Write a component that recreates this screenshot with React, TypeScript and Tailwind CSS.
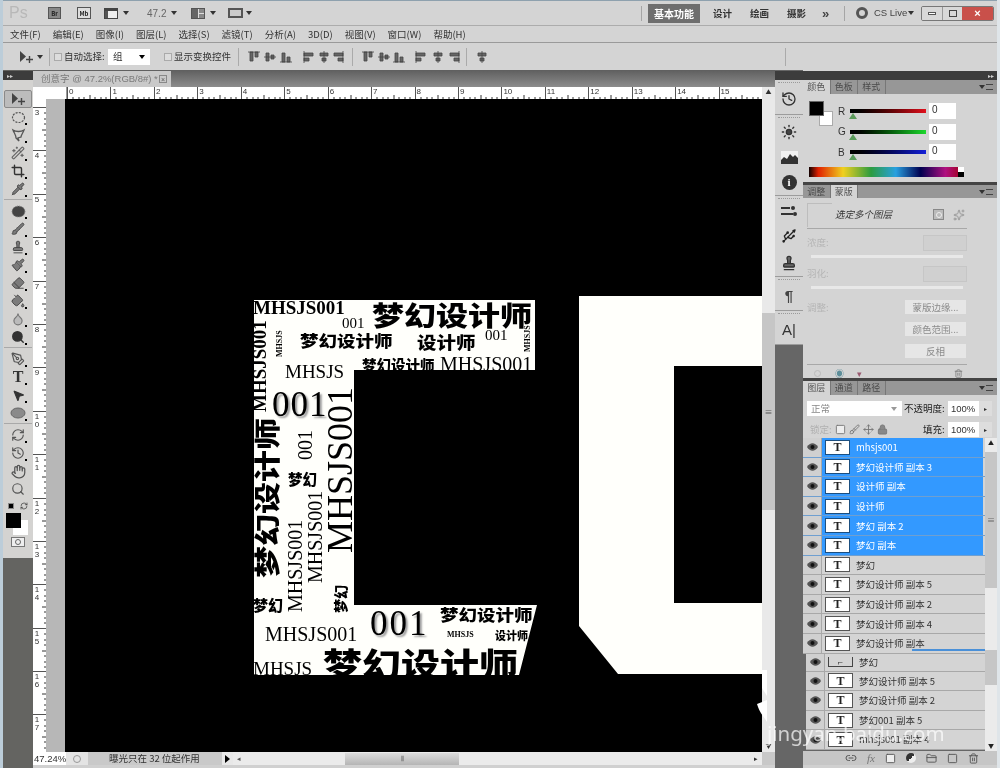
import type { ReactNode } from "react";
import {
  Crop, Wand2, Pipette, Brush, Stamp, Eraser, PaintBucket, Droplet, PenTool, MousePointer2, Hand, Search,
  Link2, Trash2, Lock, Move, Sun, Usb, FolderClosed, Square, RefreshCw, Sparkles, Paintbrush, History,
} from "lucide-react";

const cjk = "font-['Noto_Sans_CJK_SC',sans-serif]";

function Caret({ className = "" }: { className?: string }) {
  return <span className={`h-0 w-0 border-x-[3px] border-t-[4px] border-x-transparent border-t-[#333] ${className}`} />;
}

function MoveIcon() {
  return (
    <svg width="16" height="16" viewBox="0 0 16 16" className="text-[#444]">
      <path d="M2 2v11l6-5.5z" fill="currentColor" />
      <path d="M11.5 7v7M8 10.5h7" stroke="currentColor" strokeWidth="1.4" />
    </svg>
  );
}

function Grip() {
  return <div className="mx-[3px] mt-[2px] h-[2px] border-t border-dotted border-[#9a9a9a]" />;
}

// toolbox: one slot for each tool, flyout mark in the corner
function Tool({ children, on, plain }: { children: ReactNode; on?: boolean; plain?: boolean }) {
  return (
    <div className={`relative flex h-[18px] w-full items-center justify-center ${on ? "rounded-[2px] border border-[#8a8a8a] bg-[#bcbcbc]" : ""}`}>
      {children}
      {!plain && <span className="absolute bottom-[1px] right-[5px] h-[2px] w-[2px] bg-black" />}
    </div>
  );
}

const ic = { size: 14, className: "text-[#3f3f3f]", fill: "#7b7b7b", strokeWidth: 1.5 };

function Toolbox() {
  const sep = <div className="my-[1px] h-[2px] w-full shrink-0 border-t border-[#a9a9a9]" />;
  return (
    <div className="flex h-full w-[30px] shrink-0 flex-col bg-[#646461]">
      <div className="mt-[1px] h-[9px] shrink-0 bg-[#3c3c3c] pl-[4px] text-[6px] leading-[9px] text-[#ccc]">▸▸</div>
      <div className="flex h-[478px] shrink-0 flex-col items-center bg-[#d4d3d1] px-[1px] pt-[10px]">
        <Tool on plain><MoveIcon /></Tool>
        <Tool><svg width="15" height="13" viewBox="0 0 15 13"><ellipse cx="7.5" cy="6.5" rx="6" ry="5" fill="none" stroke="#555" strokeWidth="1.2" strokeDasharray="2 1.2" /></svg></Tool>
        <Tool><svg width="15" height="14" viewBox="0 0 15 14"><path d="M2 2c3 2 8 2 11 0-1 3-3 5-3 7l-3 1 1 3-3-3C5 7 3 5 2 2z" fill="none" stroke="#555" strokeWidth="1.3" /></svg></Tool>
        <Tool><Wand2 size={14} className="text-[#666]" /></Tool>
        <Tool><Crop size={14} className="text-[#333]" strokeWidth={2.4} /></Tool>
        <Tool><Pipette {...ic} /></Tool>
        {sep}
        <Tool><svg width="15" height="13" viewBox="0 0 15 13"><ellipse cx="7.5" cy="6.5" rx="6.5" ry="5.5" fill="#444" stroke="#888" strokeDasharray="1 1" /></svg></Tool>
        <Tool><Brush {...ic} /></Tool>
        <Tool><Stamp {...ic} /></Tool>
        <Tool><Paintbrush {...ic} /></Tool>
        <Tool><Eraser {...ic} /></Tool>
        <Tool><PaintBucket {...ic} /></Tool>
        <Tool><Droplet size={14} className="text-[#777]" fill="#bbb" /></Tool>
        <Tool><Search size={14} className="text-[#333]" fill="#333" strokeWidth={2.4} /></Tool>
        {sep}
        <Tool><PenTool size={14} className="text-[#555]" /></Tool>
        <Tool><span className="font-['Liberation_Serif',serif] text-[16px] font-bold leading-none text-[#333]">T</span></Tool>
        <Tool><MousePointer2 size={13} className="text-[#333]" fill="#333" /></Tool>
        <Tool><svg width="16" height="12" viewBox="0 0 16 12"><ellipse cx="8" cy="6" rx="7" ry="5" fill="#8a8a8a" stroke="#666" /></svg></Tool>
        {sep}
        <Tool><RefreshCw size={14} className="text-[#555]" /></Tool>
        <Tool><History size={14} className="text-[#555]" /></Tool>
        <Tool plain><Hand size={15} className="text-[#555]" /></Tool>
        <Tool plain><Search size={14} className="text-[#555]" /></Tool>
        <div className="mt-[2px] flex h-[12px] w-full shrink-0 items-center justify-between px-[4px]">
          <span className="h-[6px] w-[6px] border border-[#888] bg-black" />
          <RefreshCw size={8} className="text-[#333]" />
        </div>
        <div className="relative mt-[1px] h-[22px] w-[24px] shrink-0">
          <div className="absolute left-[7px] top-[7px] h-[15px] w-[15px] bg-white" />
          <div className="absolute left-0 top-0 h-[15px] w-[15px] bg-black" />
        </div>
        <div className="mt-[2px] flex h-[10px] w-[14px] shrink-0 items-center justify-center border border-[#777] bg-[#eee]">
          <span className="h-[6px] w-[6px] rounded-full border border-[#666]" />
        </div>
      </div>
    </div>
  );
}

function RulerCell({ n }: { n: number }) {
  return (
    <div className="relative flex h-full w-[43.45px] shrink-0 flex-col justify-between border-l border-[#555]">
      <span className="pl-[1px] pt-[1px] font-['Liberation_Sans',sans-serif] text-[8px] leading-[8px] text-[#333]">{n}</span>
      <svg width="43" height="4" viewBox="0 0 43 4" className="absolute bottom-0 left-0">
        {[5, 11, 16, 22, 27, 33, 38].map((x) => (
          <line key={x} x1={x} x2={x} y1={x === 22 ? 0 : 2} y2="4" stroke="#333" />
        ))}
      </svg>
    </div>
  );
}

function VRulerCell({ n }: { n: number }) {
  return (
    <div className="relative h-[43.4px] w-full shrink-0 border-t border-[#555]">
      <div className="flex w-[8px] flex-col items-center pt-[1px] font-['Liberation_Sans',sans-serif] text-[8px] leading-[8px] text-[#333]">
        {String(n).split("").map((d, i) => <span key={i}>{d}</span>)}
      </div>
      <svg width="4" height="43" viewBox="0 0 4 43" className="absolute right-0 top-0">
        {[5, 11, 16, 22, 27, 33, 38].map((y) => (
          <line key={y} y1={y} y2={y} x1={y === 22 ? 0 : 2} x2="4" stroke="#333" />
        ))}
      </svg>
    </div>
  );
}

function Art({ className, children }: { className: string; children: ReactNode }) {
  return <span className={`absolute whitespace-nowrap leading-none text-black ${className}`}>{children}</span>;
}

const serif = "font-['Liberation_Serif',serif]";
const heavy = "font-['Noto_Sans_CJK_SC',sans-serif] font-black";

// the lettered block on the canvas, coordinates are its own
function Artwork() {
  return (
    <div className="absolute left-[189px] top-[201px] h-[375px] w-[283px] overflow-hidden bg-[#fffffb] [clip-path:polygon(0_0,281px_0,281px_70px,100px_70px,100px_305px,283px_305px,265px_375px,0_375px)]">
      <Art className={`${serif} -left-[1px] -top-[2px] text-[19px] font-bold`}>MHSJS001</Art>
      <Art className={`${heavy} left-[118px] top-[0px] origin-top-left scale-y-[0.85] text-[32px]`}>梦幻设计师</Art>
      <Art className={`${serif} left-[88px] top-[16px] text-[15px]`}>001</Art>
      <Art className={`${heavy} left-[46px] top-[33px] origin-top-left scale-y-[0.85] text-[18.5px]`}>梦幻设计师</Art>
      <Art className={`${heavy} left-[163px] top-[34px] origin-top-left scale-y-[0.85] text-[19.5px]`}>设计师</Art>
      <Art className={`${serif} left-[231px] top-[28px] text-[15px]`}>001</Art>
      <Art className={`${heavy} left-[108px] top-[58px] text-[14.5px]`}>梦幻设计师</Art>
      <Art className={`${serif} left-[186px] top-[54px] text-[20px]`}>MHSJS001</Art>
      <Art className={`${serif} left-[31px] top-[62px] text-[19px]`}>MHSJS</Art>
      <Art className={`${serif} left-[18px] top-[87px] text-[35px] tracking-[1px] [text-shadow:2px_2px_2px_#999]`}>001</Art>
      <Art className={`${serif} -left-[4px] top-[112px] origin-top-left -rotate-90 text-[19px] font-bold`}>MHSJS001</Art>
      <Art className={`${serif} left-[22px] top-[57px] origin-top-left -rotate-90 text-[8px] font-bold`}>MHSJS</Art>
      <Art className={`${serif} left-[270px] top-[52px] origin-top-left -rotate-90 text-[8px] font-bold`}>MHSJS</Art>
      <Art className={`${serif} left-[68px] top-[253px] origin-top-left -rotate-90 text-[36px]`}>MHSJS001</Art>
      <Art className={`${heavy} -left-[1px] top-[278px] origin-top-left -rotate-90 scale-y-[0.8] text-[32px]`}>梦幻设计师</Art>
      <Art className={`${serif} left-[41px] top-[160px] origin-top-left -rotate-90 text-[20px]`}>001</Art>
      <Art className={`${heavy} left-[34px] top-[172px] text-[14.5px]`}>梦幻</Art>
      <Art className={`${serif} left-[51px] top-[283px] origin-top-left -rotate-90 text-[20px]`}>MHSJS001</Art>
      <Art className={`${serif} left-[31px] top-[312px] origin-top-left -rotate-90 text-[20px]`}>MHSJS001</Art>
      <Art className={`${heavy} -left-[1px] top-[297px] text-[15px]`}>梦幻</Art>
      <Art className={`${heavy} left-[79px] top-[313px] origin-top-left -rotate-90 text-[14px]`}>梦幻</Art>
      <Art className={`${serif} left-[116px] top-[306px] text-[35px] tracking-[2px] [text-shadow:2px_2px_2px_#999]`}>001</Art>
      <Art className={`${heavy} left-[186px] top-[307px] origin-top-left scale-y-[0.85] text-[18.5px]`}>梦幻设计师</Art>
      <Art className={`${serif} left-[11px] top-[324px] text-[20px]`}>MHSJS001</Art>
      <Art className={`${serif} left-[193px] top-[331px] text-[8px] font-bold`}>MHSJS</Art>
      <Art className={`${heavy} left-[241px] top-[330px] text-[11px]`}>设计师</Art>
      <Art className={`${heavy} left-[69px] top-[346px] origin-top-left scale-y-[0.85] text-[39px]`}>梦幻设计师</Art>
      <Art className={`${serif} -left-[1px] top-[359px] text-[19px]`}>MHSJS</Art>
    </div>
  );
}

function DocWindow() {
  return (
    <div className="flex h-full w-[742px] shrink-0 flex-col">
      <div className="h-[17px] shrink-0 bg-gradient-to-b from-[#5f5f5f] to-[#8c8c8c] pt-[1px]">
        <div className="flex h-[16px] w-[138px] items-center bg-[#c9c9c9] pl-[8px] font-['Liberation_Sans','Noto_Sans_CJK_SC',sans-serif] text-[9.5px] text-[#7a7a7a]">
          <span className="w-[118px] whitespace-nowrap">创意字 @ 47.2%(RGB/8#) *</span>
          <span className="flex h-[8px] w-[8px] items-center justify-center border border-[#888] text-[7px] leading-none text-[#555]">×</span>
        </div>
      </div>
      <div className="flex h-[12px] shrink-0 bg-white">
        <div className="h-full w-[34px] shrink-0 border-r border-[#999]" />
        <div className="flex min-w-0 flex-1 overflow-hidden">
          {Array.from({ length: 17 }, (_, i) => <RulerCell key={i} n={i} />)}
        </div>
        <div className="w-[13px] shrink-0 bg-[#e8e8e8] pt-[1px] text-center text-[6px] leading-[8px] text-[#333]">▲</div>
      </div>
      <div className="flex min-h-0 flex-1">
        <div className="w-[13px] shrink-0 overflow-hidden bg-white pt-[8px]">
          {Array.from({ length: 15 }, (_, i) => <VRulerCell key={i} n={i + 3} />)}
        </div>
        <div className="w-[19px] shrink-0 bg-[#b7b7b7]" />
        <div className="relative min-w-0 flex-1 overflow-hidden bg-black">
          <Artwork />
          <div className="absolute left-[514px] top-[197px] h-[378px] w-[183px] bg-[#fffffb] [clip-path:polygon(0_0,183px_0,183px_70px,95px_70px,95px_307px,183px_307px,183px_378px,39px_378px,0_330px)]" />
        </div>
        <div className="flex w-[13px] shrink-0 flex-col bg-[#e9e9e9]">
          <div className="mt-[214px] flex h-[197px] shrink-0 items-center justify-center bg-[#c6c6c6] text-[8px] text-[#555]">≡</div>
          <div className="mt-auto pb-[2px] text-center text-[6px] leading-[8px] text-[#333]">▼</div>
        </div>
      </div>
      <div className="flex h-[13px] shrink-0 items-stretch text-[9.5px] leading-[13px] text-[#333]">
        <div className="w-[33px] shrink-0 bg-white pl-[1px] font-['Liberation_Sans',sans-serif] text-[9.5px]">47.24%</div>
        <div className="flex w-[22px] shrink-0 items-center justify-center bg-[#e4e4e4]">
          <span className="h-[8px] w-[8px] rounded-full border border-[#999]" />
        </div>
        <div className="w-[134px] shrink-0 whitespace-nowrap bg-[#c9c9c9] pl-[21px]">曝光只在 32 位起作用</div>
        <div className="flex w-[11px] shrink-0 items-center justify-center bg-[#e8e8e8]">
          <span className="h-0 w-0 border-y-[4px] border-l-[5px] border-y-transparent border-l-black" />
        </div>
        <div className="flex min-w-0 flex-1 items-center bg-[#ebebeb] pl-[4px]">
          <span className="text-[7px] text-[#555]">◂</span>
          <div className="ml-[104px] flex h-[12px] w-[114px] items-center justify-center bg-gradient-to-b from-[#dcdcdc] to-[#b5b5b5] text-[7px] text-[#555]">⦀</div>
          <span className="ml-auto mr-[4px] text-[7px] text-[#333]">▸</span>
        </div>
        <div className="w-[13px] shrink-0 bg-[#c8c8c8]" />
      </div>
      <div className="h-[3px] shrink-0 bg-[#d0d0d0]" />
    </div>
  );
}

function DockGroup({ children, h }: { children: ReactNode; h: string }) {
  return (
    <div className={`flex w-full shrink-0 flex-col border-b border-[#9c9c9c] bg-[#d4d4d4] ${h}`}>
      <Grip />
      <div className="flex flex-1 flex-col items-center justify-around">{children}</div>
    </div>
  );
}

function Dock() {
  return (
    <div className="flex h-full w-[28px] shrink-0 flex-col bg-[#666]">
      <div className="mt-[1px] h-[9px] shrink-0 bg-[#3c3c3c]" />
      <DockGroup h="h-[35px]">
        <History size={16} className="text-[#333]" />
      </DockGroup>
      <DockGroup h="h-[81px]">
        <Sun size={16} className="text-[#333]" fill="#444" />
        <svg width="17" height="13" viewBox="0 0 17 13"><rect width="17" height="13" fill="#f2f2f2" /><path d="M0 13V9l3-3 3 2 3-5 3 3 2-2 3 3v6z" fill="#333" /></svg>
        <span className="flex h-[15px] w-[15px] items-center justify-center rounded-full bg-[#333] font-['Liberation_Serif',serif] text-[11px] font-bold text-white">i</span>
      </DockGroup>
      <DockGroup h="h-[81px]">
        <svg width="18" height="12" viewBox="0 0 18 12"><path d="M1 3h9M1 9h12" stroke="#333" strokeWidth="2" /><circle cx="13" cy="3" r="2" fill="#333" /><circle cx="15" cy="9" r="2" fill="#333" /></svg>
        <Usb size={16} className="text-[#222]" strokeWidth={2} />
        <Stamp size={16} className="text-[#333]" fill="#666" />
      </DockGroup>
      <DockGroup h="h-[34px]">
        <span className="font-['Liberation_Sans',sans-serif] text-[15px] font-bold leading-none text-[#444]">¶</span>
      </DockGroup>
      <DockGroup h="h-[34px]">
        <span className="font-['Liberation_Sans',sans-serif] text-[15px] leading-none text-[#333]">A|</span>
      </DockGroup>
    </div>
  );
}

function PanelTabs({ tabs, active, h = "h-[14px]" }: { tabs: string[]; active: number; h?: string }) {
  return (
    <div className={`flex shrink-0 items-stretch bg-[#979797] ${h}`}>
      {tabs.map((t, i) => (
        <div
          key={t}
          className={`flex w-[27.5px] shrink-0 items-center justify-center border-r border-[#777] text-[9px] ${i === active ? "bg-[#d4d4d4] text-[#555]" : "text-[#4a4a4a]"}`}
        >
          {t}
        </div>
      ))}
      <div className="ml-auto mr-[4px] flex items-center gap-[1px]">
        <Caret className="border-t-[#333]" />
        <span className="h-[6px] w-[7px] border-y border-[#444] text-[0px]" />
      </div>
    </div>
  );
}

function ColorRow({ label, bar }: { label: string; bar: string }) {
  return (
    <div className="flex h-[20.5px] items-center">
      <span className="w-[12px] font-['Liberation_Sans',sans-serif] text-[10px] text-[#333]">{label}</span>
      <div className="relative h-[4px] w-[76px]">
        <div className={`h-full w-full ${bar}`} />
        <span className="absolute -left-[1px] top-[4px] h-0 w-0 border-x-[4px] border-b-[6px] border-x-transparent border-b-[#5a9a5a]" />
      </div>
      <span className="ml-[3px] h-[16px] w-[27px] bg-white pl-[3px] font-['Liberation_Sans',sans-serif] text-[10px] leading-[14px] text-[#333]">0</span>
    </div>
  );
}

function ColorPanel() {
  return (
    <div className="h-[112px] shrink-0">
      <div className="mt-[1px] flex h-[9px] items-center justify-end bg-[#3c3c3c] pr-[3px] text-[6px] leading-none text-[#ccc]">▸▸</div>
      <PanelTabs tabs={["颜色", "色板", "样式"]} active={0} />
      <div className="flex pl-[6px] pt-[7px]">
        <div className="relative h-[25px] w-[25px] shrink-0">
          <div className="absolute left-[10px] top-[10px] h-[15px] w-[14px] border border-[#aaa] bg-white" />
          <div className="absolute left-0 top-0 h-[15px] w-[15px] border border-[#666] bg-black" />
        </div>
        <div className="ml-[4px]">
          <ColorRow label="R" bar="bg-gradient-to-r from-black to-[#e0101c]" />
          <ColorRow label="G" bar="bg-gradient-to-r from-black to-[#1cd82c]" />
          <ColorRow label="B" bar="bg-gradient-to-r from-black to-[#1420d8]" />
        </div>
      </div>
      <div className="relative ml-[6px] mt-[4px] h-[10px] w-[155px] bg-[linear-gradient(90deg,#100000_0%,#e02000_6%,#f0d020_22%,#2c9c40_40%,#28a0e0_56%,#000050_72%,#b01080_88%,#a00010_100%)]">
        <div className="absolute right-0 top-0 h-[5px] w-[6px] bg-white" />
        <div className="absolute bottom-0 right-0 h-[5px] w-[6px] bg-black" />
      </div>
    </div>
  );
}

function MaskRow({ label }: { label: string }) {
  return (
    <div className="h-[31px]">
      <div className="flex h-[21px] items-center justify-between pr-[30px]">
        <span className="text-[9.5px] text-[#b5b5b5]">{label}</span>
        <span className="h-[16px] w-[44px] border border-[#c6c6c6] bg-[#d0d0d0]" />
      </div>
      <div className="ml-[4px] mr-[34px] mt-[2px] h-[3px] bg-[#e8e8e8]" />
    </div>
  );
}

function MaskButton({ children }: { children: ReactNode }) {
  return (
    <div className="flex h-[14px] w-[61px] items-center justify-center whitespace-nowrap bg-[#e6e6e6] text-[9.5px] text-[#8c8c8c]">
      {children}
    </div>
  );
}

function MaskPanel() {
  return (
    <div className="h-[196px] shrink-0 border-t-[3px] border-[#444]">
      <PanelTabs tabs={["调整", "蒙版"]} active={1} h="h-[13px]" />
      <div className="pl-[4px] pt-[3px]">
        <div className="mr-[30px] flex h-[28px] items-center border-b border-[#a8a8a8]">
          <div className="h-[24px] w-[25px] shrink-0 border-l border-t border-[#bdbdbd]" />
          <span className="ml-[3px] w-[57px] whitespace-nowrap text-[9.5px] italic text-[#333]">选定多个图层</span>
          <span className="ml-[41px] flex h-[11px] w-[11px] items-center justify-center border border-[#888] bg-[#bbb]">
            <span className="h-[6px] w-[6px] rounded-full border border-[#eee]" />
          </span>
          <Sparkles size={12} className="ml-[9px] text-[#999]" />
        </div>
        <div className="pt-[3px]">
          <MaskRow label="浓度:" />
          <MaskRow label="羽化:" />
        </div>
        <div className="mt-[6px] flex items-start justify-between pr-[31px]">
          <span className="text-[9.5px] leading-[14px] text-[#b5b5b5]">调整:</span>
          <div className="flex flex-col gap-[8px]">
            <MaskButton>蒙版边缘...</MaskButton>
            <MaskButton>颜色范围...</MaskButton>
            <MaskButton>反相</MaskButton>
          </div>
        </div>
        <div className="mr-[30px] mt-[6px] flex h-[13px] items-center gap-[9px] border-t border-[#a8a8a8] pl-[7px] pt-[4px]">
          <span className="h-[7px] w-[7px] rounded-full border border-[#bbb]" />
          <span className="ml-[5px] text-[9px] leading-none text-[#5d8e9a]">◉</span>
          <span className="ml-[4px] text-[9px] leading-none text-[#9a5a70]">▾</span>
          <Trash2 size={9} className="ml-auto mr-[4px] text-[#777]" />
        </div>
      </div>
    </div>
  );
}

function Eye() {
  return (
    <svg width="11" height="8" viewBox="0 0 11 8">
      <path d="M0 4c3-5 8-5 11 0-3 5-8 5-11 0z" fill="#555" />
      <circle cx="5.5" cy="4" r="2" fill="#111" />
    </svg>
  );
}

function LayerRow({ name, on, cut, h = "h-[19.6px]" }: { name: string; on?: boolean; cut?: boolean; h?: string }) {
  return (
    <div className={`flex shrink-0 items-center border-b bg-[#d4d4d4] ${h} ${on ? "border-[#6f9fd0]" : "border-[#a8a8a8]"}`}>
      <div className="flex h-full w-[19px] shrink-0 items-center justify-center border-r border-[#a8a8a8] bg-[#d0d0d0]"><Eye /></div>
      <div className={`mr-[2px] flex h-full min-w-0 flex-1 items-center pl-[3px] ${on ? "bg-[#3399ff] text-white" : "text-[#333]"}`}>
        {cut ? (
          <div className="flex h-[10px] w-[25px] shrink-0 items-start justify-center border-x border-b border-[#444]">
            <span className="text-[9px] leading-none">⌐</span>
          </div>
        ) : (
          <div className={`flex h-[15px] w-[25px] shrink-0 items-center justify-center border bg-white ${on ? "border-[#1c4f80]" : "border-[#555]"}`}>
            <span className="font-['Liberation_Serif',serif] text-[12px] font-bold leading-none text-[#222]">T</span>
          </div>
        )}
        <span className="ml-[6px] whitespace-nowrap text-[9.5px]">{name}</span>
      </div>
    </div>
  );
}

function LayersPanel() {
  const stepper = (
    <span className="flex h-[15px] w-[13px] items-center justify-center bg-[#ddd] text-[6px] text-[#333]">▸</span>
  );
  return (
    <div className="relative flex min-h-0 flex-1 flex-col border-t-[3px] border-[#444]">
      <PanelTabs tabs={["图层", "通道", "路径"]} active={0} />
      <div className="flex h-[23px] shrink-0 items-center pl-[4px] pt-[4px]">
        <div className="flex h-[15px] w-[95px] items-center justify-between bg-white pl-[4px] pr-[5px] text-[9.5px] text-[#888]">
          正常<Caret className="border-t-[#999]" />
        </div>
        <span className="ml-[2px] w-[44px] whitespace-nowrap text-[9.5px] text-[#222]">不透明度:</span>
        <span className="h-[15px] w-[31px] bg-white pl-[3px] font-['Liberation_Sans',sans-serif] text-[9.5px] leading-[15px] text-[#333]">100%</span>
        {stepper}
      </div>
      <div className="flex h-[20px] shrink-0 items-center pl-[7px] pt-[2px]">
        <span className="w-[25px] text-[9.5px] text-[#b0b0b0]">锁定:</span>
        <div className="flex w-[55px] items-center gap-[3px] text-[#777]">
          <Square size={11} fill="#eee" />
          <Brush size={11} />
          <Move size={11} />
          <Lock size={11} fill="#888" />
        </div>
        <span className="ml-[33px] w-[25px] whitespace-nowrap text-[9.5px] text-[#222]">填充:</span>
        <span className="h-[15px] w-[31px] bg-white pl-[3px] font-['Liberation_Sans',sans-serif] text-[9.5px] leading-[15px] text-[#333]">100%</span>
        {stepper}
      </div>
      <div className="flex min-h-0 flex-1">
        <div className="flex min-w-0 flex-1 flex-col overflow-hidden">
          <LayerRow on name="mhsjs001" />
          <LayerRow on name="梦幻设计师 副本 3" />
          <LayerRow on name="设计师 副本" />
          <LayerRow on name="设计师" />
          <LayerRow on name="梦幻 副本 2" />
          <LayerRow on name="梦幻 副本" />
          <LayerRow name="梦幻" />
          <LayerRow name="梦幻设计师 副本 5" />
          <LayerRow name="梦幻设计师 副本 2" />
          <LayerRow name="梦幻设计师 副本 4" />
          <LayerRow name="梦幻设计师 副本" />
          <div className="flex-1 bg-[#666] pl-[3px]">
            <LayerRow cut name="梦幻" h="h-[18px]" />
            <LayerRow name="梦幻设计师 副本 5" />
            <LayerRow name="梦幻设计师 副本 2" />
            <LayerRow name="梦幻001 副本 5" />
            <LayerRow name="mhsjs001 副本 4" />
          </div>
        </div>
        <div className="flex w-[12px] shrink-0 flex-col bg-[#ebebeb] text-center text-[6px] leading-[10px] text-[#222]">
          ▲
          <div className="mt-[4px] flex h-[136px] shrink-0 items-center justify-center bg-[#c6c6c6] text-[8px] text-[#666]">≡</div>
          <div className="mt-[62px] h-[35px] shrink-0 bg-[#c6c6c6]" />
          <span className="mt-auto">▼</span>
        </div>
      </div>
      <div className="flex h-[14px] shrink-0 items-center justify-end gap-[10px] bg-[#c6c6c6] pr-[18px] text-[#555]">
        <Link2 size={12} />
        <span className="font-['Liberation_Serif',serif] text-[11px] italic leading-none text-[#777]">fx</span>
        <Square size={11} fill="#eee" />
        <span className="h-[10px] w-[10px] rounded-full bg-[linear-gradient(135deg,#333_50%,#eee_50%)]" />
        <FolderClosed size={11} />
        <Square size={11} />
        <Trash2 size={11} />
      </div>
      <div className="h-[3px] shrink-0 bg-[#d0d0d0]" />
      {/* stray blue stroke from the stitched capture */}
      <span className="absolute left-[109px] top-[268px] h-[2px] w-[73px] bg-[#4a90d8]" />
    </div>
  );
}

// six align variants, top/middle/bottom and left/centre/right
function AlignIcon({ v = 0 }: { v?: number }) {
  const shapes = [
    "M0 1h12M2 1h3v9H2zM7 1h3v5H7z",
    "M0 6h12M2 2h3v8H2zM7 4h3v4H7z",
    "M0 11h12M2 2h3v9H2zM7 6h3v5H7z",
    "M1 0v12M1 2h9v3H1zM1 7h5v3H1z",
    "M6 0v12M2 2h8v3H2zM4 7h4v3H4z",
    "M11 0v12M2 2h9v3H2zM6 7h5v3H6z",
  ];
  return (
    <svg width="12" height="12" viewBox="0 0 12 12">
      <path d={shapes[v]} fill="#666" stroke="#444" strokeWidth="0.8" />
    </svg>
  );
}

export default function App() {
  const menus = ["文件(F)", "编辑(E)", "图像(I)", "图层(L)", "选择(S)", "滤镜(T)", "分析(A)", "3D(D)", "视图(V)", "窗口(W)", "帮助(H)"];
  return (
    <div className={`relative flex h-[768px] w-[1000px] flex-col overflow-hidden bg-[#d4d4d4] pl-[3px] pr-[3px] text-[#333] blur-[0.4px] ${cjk}`}>
      <div className="absolute inset-y-0 left-0 w-[3px] bg-[#bccdd9]" />
      <div className="absolute inset-y-0 right-0 w-[3px] bg-[#dfe5e9]" />

      {/* TITLE BAR */}
      <div className="flex h-[26px] shrink-0 items-center border-b border-t border-b-[#acacac] border-t-[#8ea1ae] text-[9.5px]">
        <span className="ml-[6px] w-[22px] font-['Liberation_Sans',sans-serif] text-[16px] text-[#b8b8b8]">Ps</span>
        <span className="ml-[17px] flex h-[12px] w-[13px] items-center justify-center border border-[#555] bg-[#888] text-[6px] font-bold text-[#222]">Br</span>
        <span className="ml-[16px] flex h-[12px] w-[14px] items-center justify-center border border-[#555] bg-[#ddd] text-[6px] font-bold text-[#222]">Mb</span>
        <span className="ml-[13px] flex h-[11px] w-[14px] items-start gap-[1px] border border-t-[3px] border-[#444] bg-[#eee]"><span className="h-full w-[3px] bg-[#555]" /></span>
        <Caret className="ml-[5px]" />
        <span className="ml-[18px] w-[18px] font-['Liberation_Sans',sans-serif] text-[10px] text-[#666]">47.2</span>
        <Caret className="ml-[6px]" />
        <span className="ml-[14px] grid h-[11px] w-[14px] grid-cols-2 gap-[1px] border border-[#555] bg-[#ddd]"><span className="row-span-2 bg-[#666]" /><span className="bg-[#888]" /><span className="bg-[#888]" /></span>
        <Caret className="ml-[5px]" />
        <span className="ml-[12px] h-[10px] w-[15px] border-2 border-[#555] bg-[#ccc]" />
        <Caret className="ml-[3px]" />

        <span className="ml-[389px] h-[15px] w-px bg-[#a5a5a5]" />
        <span className="ml-[6px] flex h-[19px] w-[52px] items-center justify-center bg-[#6e6e6e] text-[10px] font-bold text-white">基本功能</span>
        <span className="ml-[13px] w-[18px] whitespace-nowrap font-bold">设计</span>
        <span className="ml-[19px] w-[19px] whitespace-nowrap font-bold">绘画</span>
        <span className="ml-[18px] w-[20px] whitespace-nowrap font-bold">摄影</span>
        <span className="ml-[15px] w-[11px] font-['Liberation_Sans',sans-serif] text-[13px] font-bold leading-none text-[#444]">»</span>
        <span className="ml-[11px] h-[15px] w-px bg-[#a5a5a5]" />
        <span className="ml-[11px] h-[12px] w-[12px] rounded-full border-[3px] border-[#555]" />
        <span className="ml-[6px] w-[31px] whitespace-nowrap font-['Liberation_Sans',sans-serif] text-[9.5px] text-[#444]">CS Live</span>
        <Caret className="ml-[3px]" />
        <div className="ml-[7px] flex h-[15px] w-[73px] overflow-hidden rounded-[2px] border border-[#777]">
          <span className="flex w-[20px] items-center justify-center bg-[#d8d8d8]"><span className="h-[3px] w-[8px] border border-[#555] bg-white" /></span>
          <span className="flex w-[20px] items-center justify-center border-l border-[#999] bg-[#d8d8d8]"><span className="h-[7px] w-[8px] border border-[#444]" /></span>
          <span className="flex flex-1 items-center justify-center bg-[#c9504a] font-['Liberation_Sans',sans-serif] text-[11px] font-bold leading-none text-white">×</span>
        </div>
      </div>

      {/* MENU */}
      <div className="flex h-[17px] shrink-0 items-center gap-[12px] border-b border-[#9a9a9a] pl-[7px] text-[9.5px] text-[#333]">
        {menus.map((m) => <span key={m} className="whitespace-nowrap">{m}</span>)}
      </div>

      {/* OPTIONS */}
      <div className="flex h-[27px] shrink-0 items-center text-[9.5px] text-[#333]">
        <span className="ml-[15px]"><MoveIcon /></span>
        <Caret className="ml-[3px]" />
        <span className="ml-[6px] h-[18px] w-px bg-[#aaa]" />
        <span className="ml-[4px] h-[8px] w-[8px] border border-[#aaa] bg-[#ddd]" />
        <span className="ml-[2px] w-[44px] whitespace-nowrap">自动选择:</span>
        <div className="flex h-[16px] w-[42px] items-center justify-between bg-white px-[5px]">组<Caret className="border-t-black" /></div>
        <span className="ml-[14px] h-[8px] w-[8px] border border-[#aaa] bg-[#ddd]" />
        <span className="ml-[2px] w-[64px] whitespace-nowrap">显示变换控件</span>
        <span className="h-[18px] w-px bg-[#aaa]" />
        <div className="ml-[9px] flex w-[44px] justify-between"><AlignIcon v={0} /><AlignIcon v={1} /><AlignIcon v={2} /></div>
        <div className="ml-[11px] flex w-[41px] justify-between"><AlignIcon v={3} /><AlignIcon v={4} /><AlignIcon v={5} /></div>
        <span className="ml-[8px] h-[18px] w-px bg-[#aaa]" />
        <div className="ml-[9px] flex w-[43px] justify-between"><AlignIcon v={0} /><AlignIcon v={1} /><AlignIcon v={2} /></div>
        <div className="ml-[10px] flex w-[45px] justify-between"><AlignIcon v={3} /><AlignIcon v={4} /><AlignIcon v={5} /></div>
        <span className="ml-[6px] h-[18px] w-px bg-[#aaa]" />
        <div className="ml-[9px]"><AlignIcon v={4} /></div>
        <span className="ml-[297px] h-[18px] w-px bg-[#aaa]" />
      </div>

      <div className="flex min-h-0 flex-1">
        <Toolbox />
        <DocWindow />
        <Dock />
        <div className="flex min-w-0 flex-1 flex-col">
          <ColorPanel />
          <MaskPanel />
          <LayersPanel />
        </div>
      </div>

      {/* watermark and its paw sit over the window */}
      <svg width="20" height="60" viewBox="0 0 20 60" className="absolute left-[757px] top-[670px]">
        <path d="M5 0h5v26l-5-8zM0 34c3 10 8 14 10 18V30z" fill="#fff" />
      </svg>
      <span className="absolute left-[767px] top-[723px] font-['Noto_Sans',sans-serif] text-[20.5px] leading-none text-white/70">jingyan.baidu.com</span>
    </div>
  );
}
